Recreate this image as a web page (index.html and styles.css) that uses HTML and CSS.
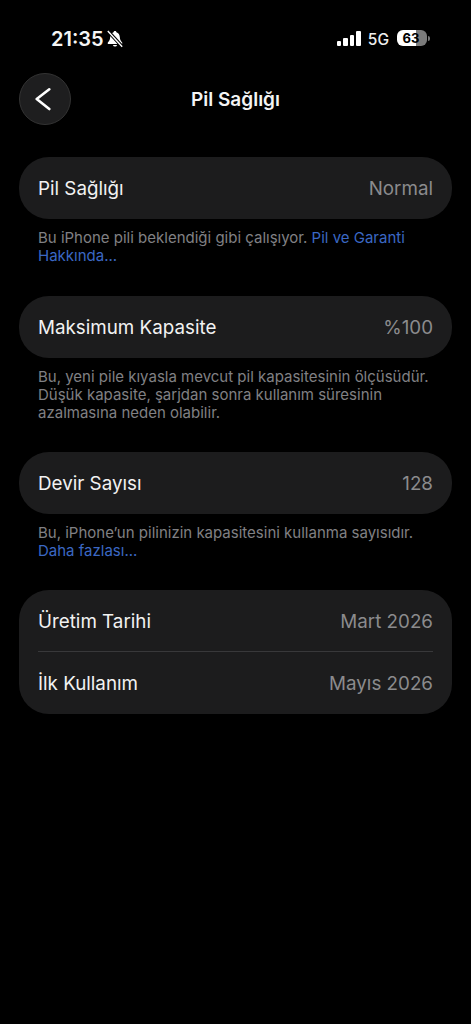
FILE: index.html
```
<!DOCTYPE html>
<html lang="tr">
<head>
<meta charset="utf-8">
<title>Pil Sağlığı</title>
<link rel="stylesheet" href="styles.css">
</head>
<body>
<div class="status">
  <div class="status-left">
    <span class="time">21:35</span>
    <svg class="bell" width="18" height="18" viewBox="0 0 18 18"><path d="M9 1C8.200 1 7.700 1.500 7.600 2.200 5.400 2.800 4.300 4.700 4.200 7 4.100 9.300 3.500 11 1.800 12.600V14h14.400v-1.400C14.500 11 13.900 9.300 13.800 7 13.700 4.700 12.600 2.800 10.400 2.200 10.300 1.500 9.800 1 9 1z" fill="#fff"/><path d="M6.900 15a2.200 2.200 0 0 0 4.200 0z" fill="#fff"/><path d="M1.500 .5 16.500 17" stroke="#000" stroke-width="3.400"/><path d="M1.800 1 16.200 16.800" stroke="#fff" stroke-width="1.400"/></svg>
  </div>
  <div class="status-right">
    <div class="signal"><i class="b1"></i><i class="b2"></i><i class="b3"></i><i class="b4"></i></div>
    <span class="net">5G</span>
    <div class="battery"><span class="level">63</span></div>
    <div class="nub"></div>
  </div>
</div>
<header class="nav">
  <button class="back" aria-label="Geri"><svg width="20" height="26" viewBox="0 0 20 26"><path d="M14.300 3.300 1.700 13 14.300 23" fill="none" stroke="#fff" stroke-width="2.600" stroke-linecap="round" stroke-linejoin="round"/></svg></button>
  <h1 class="title">Pil Sağlığı</h1>
</header>
<main class="content">
  <section class="card"><div class="row"><span class="label">Pil Sağlığı</span><span class="value">Normal</span></div></section>
  <p class="note note-a">Bu iPhone pili beklendiği gibi çalışıyor. <a class="link">Pil ve Garanti Hakkında...</a></p>
  <section class="card"><div class="row"><span class="label">Maksimum Kapasite</span><span class="value">%100</span></div></section>
  <p class="note note-b">Bu, yeni pile kıyasla mevcut pil kapasitesinin ölçüsüdür. Düşük kapasite, şarjdan sonra kullanım süresinin azalmasına neden olabilir.</p>
  <section class="card"><div class="row"><span class="label">Devir Sayısı</span><span class="value">128</span></div></section>
  <p class="note note-c">Bu, iPhone’un pilinizin kapasitesini kullanma sayısıdır. <a class="link">Daha fazlası...</a></p>
  <section class="card card-d">
    <div class="row"><span class="label">Üretim Tarihi</span><span class="value">Mart 2026</span></div>
    <div class="divider"></div>
    <div class="row"><span class="label">İlk Kullanım</span><span class="value">Mayıs 2026</span></div>
  </section>
</main>
</body>
</html>
```
FILE: styles.css
```
* { box-sizing: border-box; }
html, body { margin: 0; padding: 0; }
body {
  width: 471px;
  height: 1024px;
  overflow: hidden;
  background: #000;
  color: #fff;
  font-family: Inter, "Liberation Sans", sans-serif;
}
.status {
  height: 73px;
  display: flex;
  justify-content: space-between;
  align-items: flex-start;
  padding: 27px 41px 0 51px;
}
.status-left { display: flex; align-items: center; gap: 2px; height: 24px; }
.time { font-size: 20px; font-weight: 600; line-height: 24px; color: #f5f5f5; }
.bell { display: block; }
.status-right { display: flex; align-items: center; height: 24px; }
.signal { display: flex; align-items: flex-end; gap: 2px; height: 15px; margin: 0 7px 2px 0; }
.signal i { display: block; width: 4.500px; background: #fff; border-radius: 1px; }
.b1 { height: 5px; } .b2 { height: 8px; } .b3 { height: 11px; } .b4 { height: 15px; }
.net { font-size: 15.500px; font-weight: 500; margin-right: 8px; color: #eee; }
.battery {
  width: 30px;
  height: 16px;
  margin-bottom: 2px;
  padding-right: 2px;
  border-radius: 6px;
  background: linear-gradient(to right, #fff 0 63%, #7b7b7b 63% 100%);
  display: flex;
  align-items: center;
  justify-content: center;
}
.level { font-size: 13px; font-weight: 700; color: #000; line-height: 16px; }
.nub { width: 2px; height: 5px; margin: 0 0 2px 1px; background: #777; border-radius: 0 2px 2px 0; }
.nav {
  height: 52px;
  margin: 0 19px;
  display: flex;
  align-items: center;
  position: relative;
}
.back {
  width: 52px;
  height: 52px;
  padding: 0;
  border-radius: 50%;
  background: #1e1e1f;
  border: 1px solid #333;
  display: flex;
  align-items: center;
  justify-content: center;
}
.title {
  position: absolute;
  left: 0;
  right: 0;
  top: 0;
  margin: 0;
  padding-top: 1px;
  text-align: center;
  font-size: 19px;
  font-weight: 600;
  line-height: 52px;
  color: #f4f4f4;
  pointer-events: none;
}
.content { padding: 32px 19px 0; }
.card {
  background: #1c1c1d;
  border-radius: 30px;
}
.row {
  height: 62px;
  display: flex;
  align-items: center;
  justify-content: space-between;
  padding: 1px 19px 0;
  font-size: 18.800px;
  line-height: 24px;
}
.label { color: #f2f2f2; }
.value { color: #8b8b8d; }
.divider { height: 1px; margin: 0 19px; background: #38383a; }
.card-d .row:first-child { height: 61px; padding-top: 2px; }
.note {
  margin: 0;
  padding: 9.500px 19px 0;
  font-size: 15px;
  line-height: 18px;
  color: #808084;
}
.note-a { height: 77px; }
.note-b { height: 94px; }
.note-c { height: 76px; }
.link { color: #3b68c4; }
```
